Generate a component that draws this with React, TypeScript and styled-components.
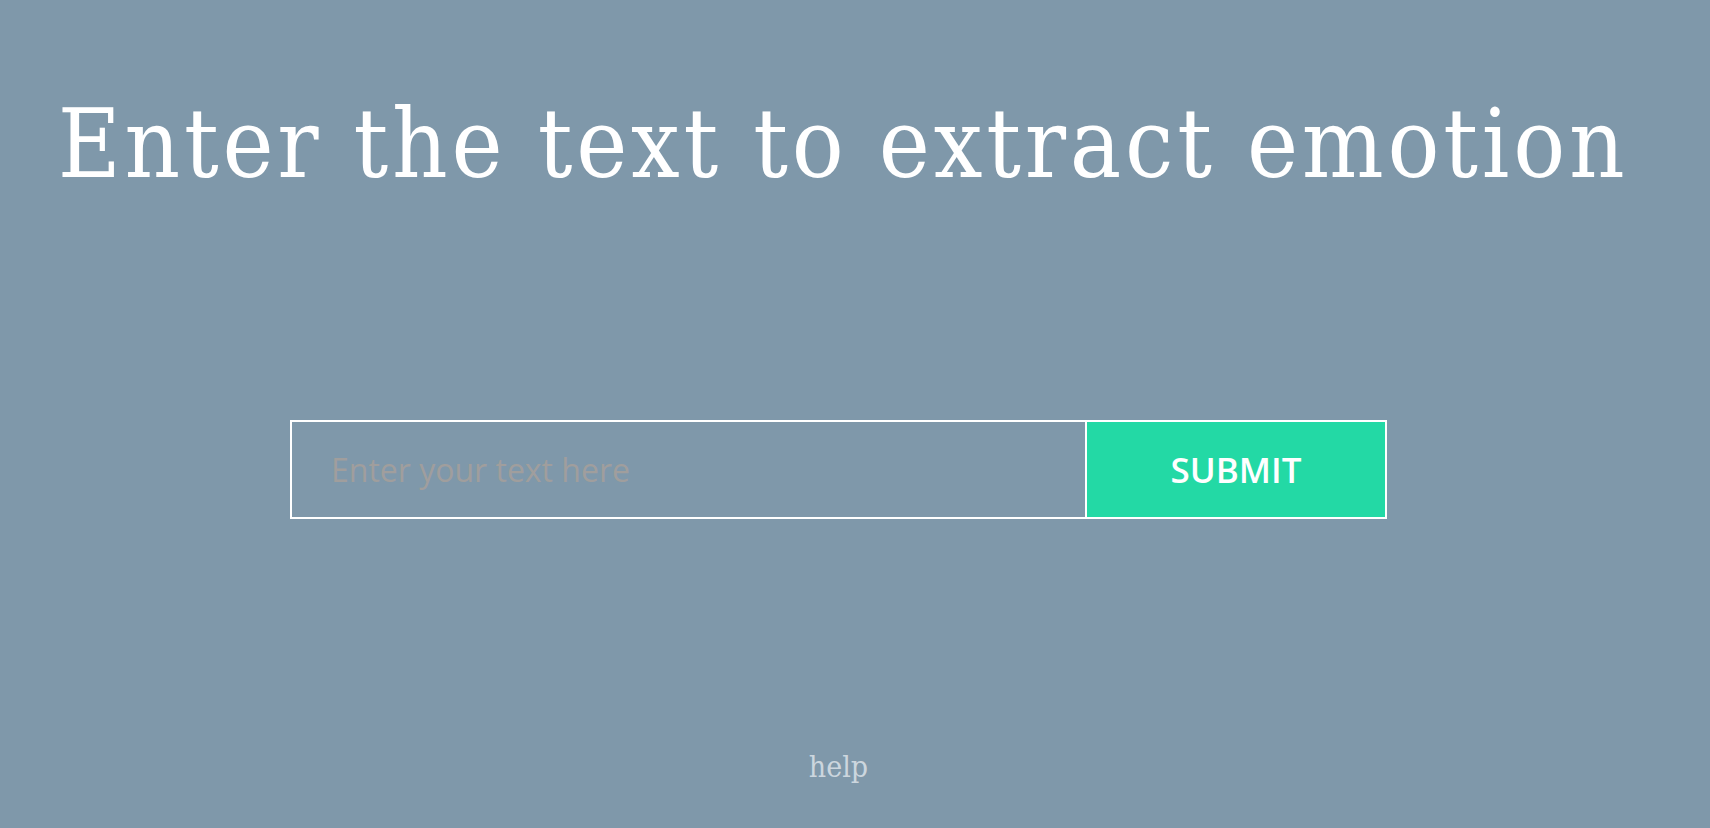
import React from "react";
import styled, { createGlobalStyle } from "styled-components";

const GlobalStyle = createGlobalStyle`
  html, body {
    margin: 0;
    padding: 0;
    background: #7f98aa;
  }
  * { box-sizing: border-box; }
`;

const Page = styled.main`
  width: calc(100% - 33px);
  min-height: 100vh;
  display: flex;
  flex-direction: column;
  align-items: center;
`;

const Title = styled.h1`
  margin: 96px 0 0;
  padding-left: 9px;
  font-family: "DejaVu Serif Condensed", "DejaVu Serif", serif;
  font-weight: normal;
  font-size: 96px;
  line-height: 1;
  letter-spacing: 3.8px;
  color: #ffffff;
  white-space: nowrap;
  text-align: center;
`;

const Form = styled.form`
  margin-top: 228px;
  display: flex;
  width: 1097px;
  height: 99px;
`;

const TextInput = styled.input`
  width: 797px;
  height: 100%;
  border: 2px solid #ffffff;
  background: transparent;
  padding: 0 0 0 39px;
  font-family: "Open Sans", "Noto Sans", sans-serif;
  font-size: 32px;
  color: #ffffff;
  outline: none;
  &::placeholder {
    color: #a09e9d;
    opacity: 1;
  }
`;

const SubmitButton = styled.button`
  flex: 1;
  height: 100%;
  border: 2px solid #ffffff;
  border-left: none;
  background: #23d9a5;
  color: #ffffff;
  font-family: "Open Sans", "Noto Sans", sans-serif;
  font-weight: 600;
  font-size: 35px;
  padding: 0;
  cursor: pointer;
`;

const HelpLink = styled.a`
  margin-top: 233px;
  font-family: "DejaVu Serif Condensed", "DejaVu Serif", serif;
  font-size: 30px;
  line-height: 1;
  color: #ccd6de;
  text-decoration: none;
`;

export default function App() {
  return (
    <>
      <GlobalStyle />
      <Page>
        <Title>Enter the text to extract emotion</Title>
        <Form onSubmit={(e) => e.preventDefault()}>
          <TextInput type="text" placeholder="Enter your text here" />
          <SubmitButton type="submit">SUBMIT</SubmitButton>
        </Form>
        <HelpLink href="#">help</HelpLink>
      </Page>
    </>
  );
}
